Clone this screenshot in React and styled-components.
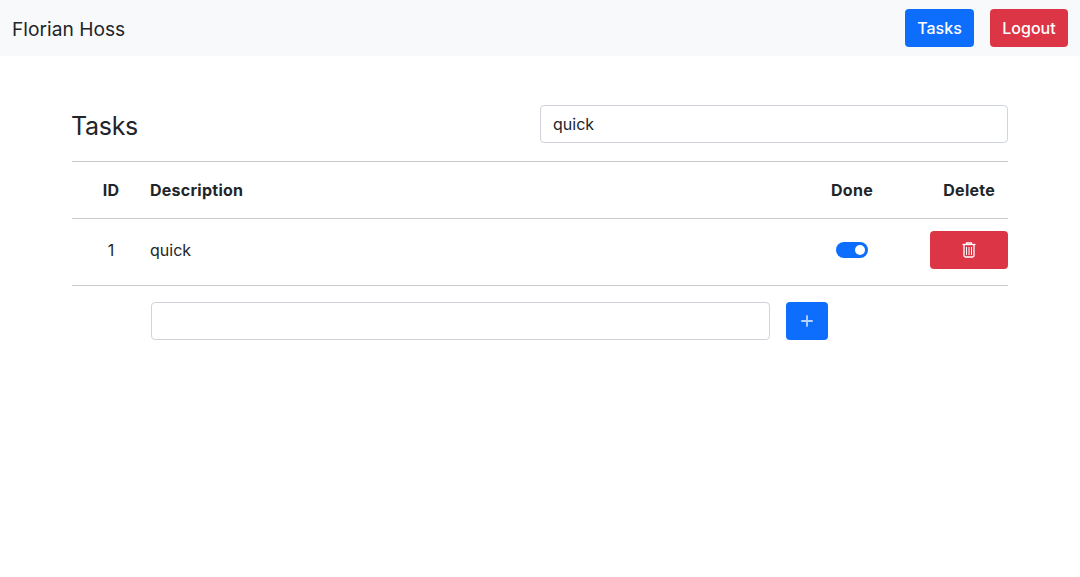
import styled, { createGlobalStyle } from "styled-components";

const Global = createGlobalStyle`
  body {
    margin: 0;
    background: #fff;
    color: #212529;
    font-family: Inter, "Liberation Sans", sans-serif;
    font-size: 16px;
  }
`;

const Nav = styled.nav`
  height: 56px;
  background: #f8f9fa;
  display: flex;
  align-items: center;
  justify-content: space-between;
  padding: 0 12px;
`;

const Brand = styled.a`
  font-size: 19.2px;
  padding-top: 2px;
  color: #212529;
`;

const NavButtons = styled.div`
  display: flex;
  gap: 16px;
`;

const Button = styled.button`
  height: 38px;
  width: ${(p) => p.$width}px;
  padding: 0;
  border: none;
  border-radius: 4px;
  background: ${(p) => (p.$danger ? "#dc3545" : "#0d6efd")};
  color: #fff;
  font: inherit;
  font-weight: 500;
  display: flex;
  align-items: center;
  justify-content: center;
`;

const Container = styled.main`
  width: 936px;
  margin: 49px auto 0;
`;

const TitleRow = styled.div`
  display: flex;
  align-items: center;
  justify-content: space-between;
  padding-bottom: 18px;
  border-bottom: 1px solid #c8c9ca;
`;

const Title = styled.h4`
  margin: 4px 0 0 -1px;
  font-size: 25px;
  font-weight: 400;
  letter-spacing: -0.3px;
`;

const Input = styled.input`
  box-sizing: border-box;
  width: ${(p) => p.$width}px;
  height: 38px;
  padding: 6px 12px;
  border: 1px solid #ced4da;
  border-radius: 4px;
  color: #212529;
  font: inherit;
  outline: none;
`;

const HeadRow = styled.div`
  box-sizing: border-box;
  display: grid;
  grid-template-columns: 78px 1fr 72px 120px;
  align-items: center;
  height: 57px;
  border-bottom: 1px solid #c8c9ca;
  font-weight: 700;
  letter-spacing: 0.25px;
`;

const BodyRow = styled.div`
  box-sizing: border-box;
  display: grid;
  grid-template-columns: 78px 1fr 72px 120px;
  align-items: center;
  height: 67px;
  padding-bottom: 16px;
  padding-top: 12px;
  border-bottom: 1px solid #c8c9ca;
`;

const IdCell = styled.div`
  text-align: center;
`;

const DoneCell = styled.div`
  display: flex;
  justify-content: center;
`;

const DeleteHead = styled.div`
  text-align: right;
  padding-right: 13px;
`;

const DeleteCell = styled.div`
  display: flex;
  justify-content: flex-end;
`;

const Switch = styled.span`
  box-sizing: border-box;
  width: 32px;
  height: 16px;
  border-radius: 8px;
  background: #0d6efd;
  display: flex;
  justify-content: flex-end;
  align-items: center;
  padding: 0 3px;

  &::after {
    content: "";
    width: 10px;
    height: 10px;
    border-radius: 50%;
    background: #fff;
  }
`;

const AddRow = styled.form`
  display: flex;
  gap: 16px;
  margin: 16px 0 0 79px;
`;

function TrashIcon() {
  return (
    <svg width="16" height="16" viewBox="0 0 16 16" fill="none" stroke="#fff" strokeWidth="1.3">
      <path d="M1.5 2.5h13" />
      <path d="M5.5 2.5v-1.5h5v1.5" />
      <path d="M3 3v10.5a1.5 1.5 0 0 0 1.5 1.5h7a1.5 1.5 0 0 0 1.5-1.5V3" />
      <path d="M5.5 5v8M8 5v8M10.5 5v8" strokeWidth="1" />
    </svg>
  );
}

function PlusIcon() {
  return (
    <svg width="16" height="16" viewBox="0 0 16 16" fill="#fff" opacity="0.7">
      <path d="M8 2a.9.9 0 0 1 .9.9v4.2h4.2a.9.9 0 0 1 0 1.8H8.9v4.2a.9.9 0 0 1-1.8 0V8.9H2.9a.9.9 0 0 1 0-1.8h4.2V2.9A.9.9 0 0 1 8 2z" />
    </svg>
  );
}

export default function App() {
  return (
    <>
      <Global />
      <Nav>
        <Brand>Florian Hoss</Brand>
        <NavButtons>
          <Button $width={69}>Tasks</Button>
          <Button $width={78} $danger>
            Logout
          </Button>
        </NavButtons>
      </Nav>
      <Container>
        <TitleRow>
          <Title>Tasks</Title>
          <Input $width={468} defaultValue="quick" />
        </TitleRow>
        <HeadRow>
          <IdCell>ID</IdCell>
          <div>Description</div>
          <DoneCell>Done</DoneCell>
          <DeleteHead>Delete</DeleteHead>
        </HeadRow>
        <BodyRow>
          <IdCell>1</IdCell>
          <div>quick</div>
          <DoneCell>
            <Switch />
          </DoneCell>
          <DeleteCell>
            <Button $width={78} $danger>
              <TrashIcon />
            </Button>
          </DeleteCell>
        </BodyRow>
        <AddRow>
          <Input $width={619} />
          <Button $width={42}>
            <PlusIcon />
          </Button>
        </AddRow>
      </Container>
    </>
  );
}
